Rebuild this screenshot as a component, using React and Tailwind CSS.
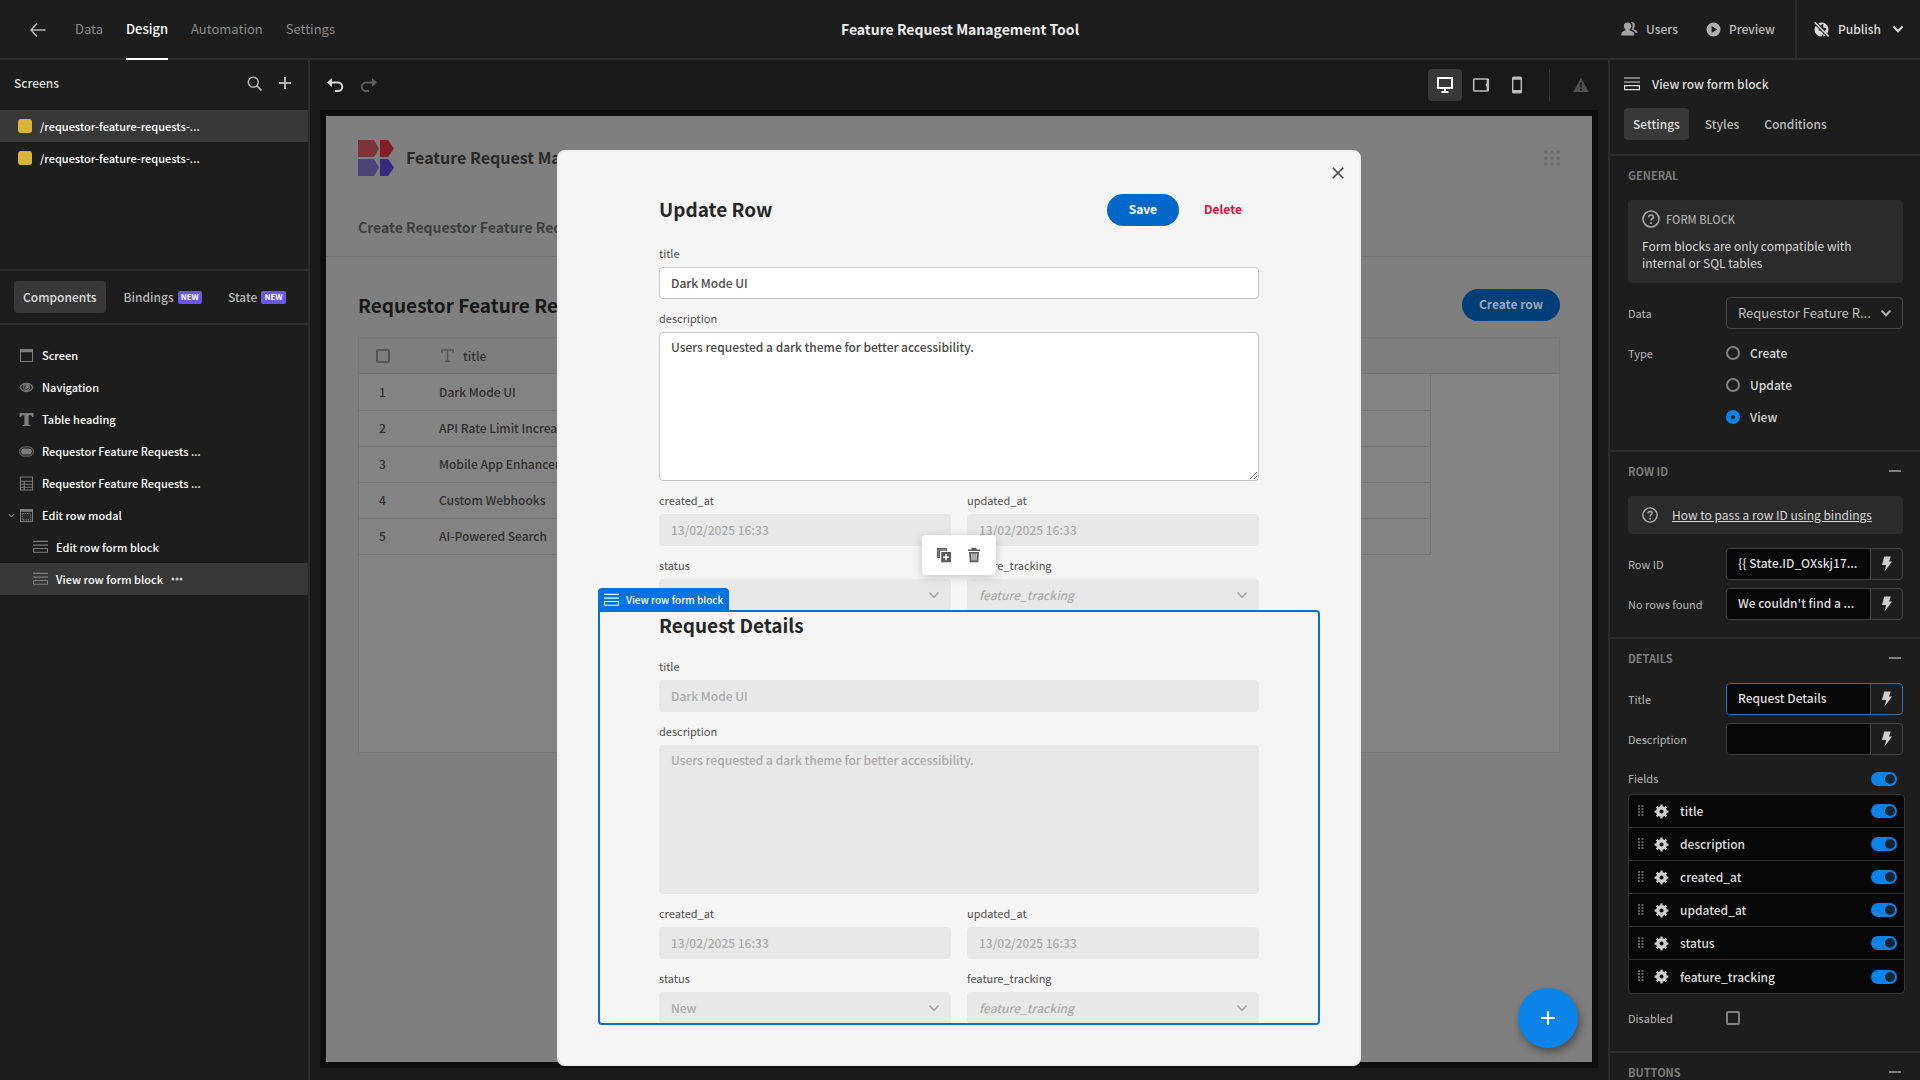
import React, { useId } from "react";

/* ---------- icons ---------- */
const Svg = ({ size = 16, w, h, box = "0 0 16 16", className = "", children }) => (
  <svg width={w || size} height={h || size} viewBox={box} className={"shrink-0 " + className} fill="none" stroke="currentColor" aria-hidden="true">
    {children}
  </svg>
);

const BackIcon = () => (
  <Svg>
    <path d="M15.500 8H1.500M7 1.500L1 8l6 6.500" strokeWidth="1.500" />
  </Svg>
);
const SearchIcon = () => (
  <Svg size={15}>
    <circle cx="6.700" cy="6.700" r="5.300" strokeWidth="1.600" />
    <path d="M10.600 10.600l4.200 4.200" strokeWidth="2" strokeLinecap="round" />
  </Svg>
);
const PlusIcon = ({ size = 14, sw = 2 }) => (
  <Svg size={size} box="0 0 14 14">
    <path d="M7 1v12M1 7h12" strokeWidth={sw} />
  </Svg>
);
const UsersIcon = () => (
  <Svg w={17} h={16} box="0 0 17 16">
    <path stroke="none" fill="currentColor" d="M6.500 1.500c2.300 0 3.700 1.400 3.700 3.500 0 1.400-.6 2.700-1.500 3.500-.3.300-.2.900.2 1.100 2.700.9 4.200 1.800 4.300 3.500V14.500H.3v-1.400c.1-1.700 1.200-2.600 3.900-3.500.4-.2.500-.8.200-1.100-.9-.8-1.500-2.100-1.500-3.500 0-2.100 1.300-3.500 3.600-3.500z" />
    <path stroke="none" fill="currentColor" d="M9.600 1c2.600-.5 4.300.9 4.300 3.200 0 1.200-.4 2.300-1.100 3.100-.3.300-.2.900.2 1.100 2.300.8 3.700 1.700 3.800 3.400h-2.400c-.6-1.500-1.800-2.400-3.900-3.200.8-1 1.200-2.200 1.200-3.500C11.700 3.100 10.900 1.700 9.600 1z" />
  </Svg>
);
const PlayIcon = () => (
  <Svg size={15}>
    <path stroke="none" fill="currentColor" fillRule="evenodd" d="M8 .5a7.500 7.500 0 100 15 7.500 7.500 0 000-15zM6 4.300v7.400L12 8z" />
  </Svg>
);
const GlobeOffIcon = () => (
  <Svg size={17} box="0 0 17 17">
    <path stroke="none" fill="currentColor" d="M5.300 2.300A7 7 0 0112 2.400c2.200 1.200 3.500 3.500 3.500 6.100 0 1.500-.4 2.800-1.200 4L11.500 9.700l1.700-.6-.3-2-2.500-.6-.6-1.900 1.300-1-1.200-.5-2.400 1.500zM2.700 4.700l3 3 .3 1.600 2 .9 1.700 1.500.2 1.800-1.200 2h-1A7 7 0 012.700 4.700z" />
    <path stroke="none" fill="currentColor" d="M10.500 12.500l2 1.900a7 7 0 01-2.400 1z" />
    <path d="M1.700 1.200l14 14.200" strokeWidth="1.500" />
  </Svg>
);
const Chevron = ({ size = 12, sw = 2, className }) => (
  <Svg size={size} box="0 0 12 12" className={className}>
    <path d="M1.500 3.500L6 8.300l4.500-4.800" strokeWidth={sw} />
  </Svg>
);
const UndoIcon = ({ className }) => (
  <Svg w={18} h={16} box="0 0 18 16" className={className}>
    <path d="M4 5.500h8a4 4 0 010 8.500H9" strokeWidth="2" />
    <path d="M6 1L1 5.500 6 10z" fill="currentColor" stroke="none" />
  </Svg>
);
const DesktopIcon = () => (
  <Svg size={18} box="0 0 18 18">
    <rect x="2" y="2" width="14" height="10" strokeWidth="2" />
    <path d="M9 12v4M5.500 16h7" strokeWidth="2" />
  </Svg>
);
const TabletIcon = () => (
  <Svg size={18} box="0 0 18 18">
    <rect x="1.700" y="3" width="14.600" height="12" rx="1" strokeWidth="1.600" />
    <path d="M15.500 3v4.500l-1 1.500 1 1.500V15" strokeWidth="1.800" />
  </Svg>
);
const PhoneIcon = () => (
  <Svg w={12} h={18} box="0 0 12 18">
    <rect x="1.700" y="1.200" width="8.600" height="15.600" rx="1" strokeWidth="1.400" />
    <path d="M1.500 2.500h9M1.500 15.300h9" strokeWidth="2.400" />
  </Svg>
);
const WarnIcon = () => (
  <Svg size={16}>
    <path stroke="none" fill="currentColor" fillRule="evenodd" d="M8 .8L15.800 15H.2L8 .8zM7.200 5.500v5h1.600v-5H7.200zm0 6.200v1.700h1.600v-1.700H7.200z" />
  </Svg>
);
const FormIcon = ({ w = 16 }) => (
  <Svg w={w} h={14} box="0 0 16 14">
    <path d="M0 1h16M0 5h16M.6 8.600h14.800v4H.6z" strokeWidth="1.200" />
  </Svg>
);
const HelpIcon = ({ size = 18 }) => (
  <Svg size={size} box="0 0 18 18">
    <circle cx="9" cy="9" r="8" strokeWidth="1.600" />
    <path d="M6.600 7.200C6.700 5.700 7.600 5 9 5s2.400.8 2.400 2c0 1.700-2.300 1.800-2.300 3.600" strokeWidth="1.600" />
    <path d="M8.100 12.200h1.900V14H8.100z" fill="currentColor" stroke="none" />
  </Svg>
);
const BoltIcon = () => (
  <Svg w={12} h={16} box="0 0 12 16">
    <path stroke="none" fill="currentColor" d="M3.200.5h6.500L8 5.600h3L3.400 15.800 5.200 9H1z" />
  </Svg>
);
const GearIcon = () => (
  <Svg size={15}>
    <circle cx="8" cy="8" r="4" strokeWidth="3.600" />
    <path d="M8 .6v2.600M8 12.800v2.600M.6 8h2.600M12.800 8h2.600M2.800 2.800l1.800 1.800M11.400 11.400l1.800 1.800M2.800 13.200l1.800-1.800M11.400 4.600l1.800-1.800" strokeWidth="2.400" />
  </Svg>
);
const GripIcon = () => (
  <Svg w={7} h={13} box="0 0 7 13">
    {[1, 4, 7, 10].map((y) => (
      <path key={y} d={`M1 ${y}h2M4.500 ${y}h2`} strokeWidth="2" />
    ))}
  </Svg>
);
const ScreenIcon = () => (
  <Svg size={15}>
    <rect x="1.600" y="1.600" width="12.800" height="12.800" strokeWidth="1.100" />
    <path d="M1 3h14" strokeWidth="3" />
  </Svg>
);
const EyeIcon = () => (
  <Svg size={15}>
    <path d="M1.200 8C2.400 5.400 4.900 3.700 8 3.700s5.600 1.700 6.800 4.300c-1.200 2.600-3.700 4.300-6.800 4.300S2.400 10.600 1.200 8z" strokeWidth="1.300" />
    <path stroke="none" fill="currentColor" fillRule="evenodd" d="M8 4.300a3.700 3.700 0 100 7.400 3.700 3.700 0 000-7.400zm0 1.200v2.400h2.400A2.500 2.500 0 118 5.500z" />
    <circle cx="8" cy="8" r="1.600" fill="currentColor" stroke="none" />
  </Svg>
);
const TextIcon = ({ thin }) => (
  <Svg size={15}>
    {thin ? (
      <path d="M2 5V2.200h12V5M8 2.200v12M5.200 14.200h5.600" strokeWidth="1.500" />
    ) : (
      <path stroke="none" fill="currentColor" d="M.5 1h15v4.400H14c-.2-1.500-.9-2-2.200-2h-1.500v9.300c0 .8.500 1.100 1.900 1.100V15H3.800v-1.200c1.400 0 1.900-.3 1.900-1.100V3.400H4.200c-1.300 0-2 .5-2.200 2H.5z" />
    )}
  </Svg>
);
const ButtonIcon = () => (
  <Svg w={15} h={11} box="0 0 16 11">
    <rect x=".6" y=".6" width="14.800" height="9.800" rx="4.900" strokeWidth="1" />
    <rect x="2.200" y="2.200" width="11.600" height="6.600" rx="3.300" fill="currentColor" stroke="none" />
  </Svg>
);
const TableIcon = () => (
  <Svg size={15}>
    <path d="M1.500 1h13v14h-13zM1.500 5.500h13M1.500 8.700h13M1.500 11.900h13M5.600 5.500V15" strokeWidth="1.100" />
  </Svg>
);
const ModalIcon = () => (
  <Svg size={15}>
    <rect x="1.600" y="1.600" width="12.800" height="12.800" strokeWidth="1.100" />
    <path d="M1 2.800h14" strokeWidth="2.600" />
    <rect x="3.500" y="5.800" width="9" height="6.800" fill="currentColor" fillOpacity=".15" strokeWidth="1.200" strokeDasharray="1.500 1" />
  </Svg>
);
const DuplicateIcon = () => (
  <Svg size={16}>
    <path stroke="none" fill="currentColor" d="M1 1h10v3H9.800V2.500H2.500v7.300H4V11H1z" />
    <path stroke="none" fill="currentColor" d="M2.500 2.500h7.300v1.300H4v6H2.500z" />
    <path stroke="none" fill="currentColor" fillRule="evenodd" d="M5.200 5H15v10.200H5.200zM9.300 7v2.400H7v1.500h2.300v2.400h1.500v-2.400h2.300V9.400h-2.300V7z" />
  </Svg>
);
const TrashIcon = () => (
  <Svg size={16}>
    <path stroke="none" fill="currentColor" fillRule="evenodd" d="M5.500.8h5v1.600H14V4H2V2.400h3.500zM3 5h10l-.7 10.200H3.700zM5.300 6.500l.3 7h.9l-.2-7zm2.200 0v7h1v-7zm2.200 0l-.2 7h.9l.3-7z" />
  </Svg>
);
const GridDots = () => (
  <Svg size={16}>
    {[2, 8, 14].map((y) => (
      <path key={y} d={`M.5 ${y}h3M6.500 ${y}h3M12.500 ${y}h3`} strokeWidth="3" />
    ))}
  </Svg>
);
const Logo = () => (
  <Svg size={36} box="0 0 36 36">
    <g stroke="none">
      <path fill="#7d3438" d="M0 0h16l5 8.500-5 8.500H0z" />
      <path fill="#801f26" d="M22 0h8l6 8.500-6 8.500h-8z" />
      <path fill="#4c4379" d="M0 19h16l5 8.500-5 8.500H0z" />
      <path fill="#352a80" d="M22 19h8l6 8.500-6 8.500h-8z" />
    </g>
  </Svg>
);

/* ---------- header ---------- */
const TopTab = ({ active, children }) => (
  <a
    href="#"
    className={
      "flex h-[60px] items-center text-[13px] " +
      (active ? "border-b-2 border-white font-medium text-white" : "pb-0.5 text-[#8a8a8a]")
    }
  >
    {children}
  </a>
);

const Header = () => (
  <header className="grid h-[60px] shrink-0 grid-cols-[1fr_auto_1fr] bg-[#1d1d1d] shadow-[inset_0_-2px_0_#2c2c2c]">
    <nav className="flex items-center gap-[23px] pl-[30px]">
      <button aria-label="Back" className="mr-1.5 text-[#b8b8b8]">
        <BackIcon />
      </button>
      <TopTab>Data</TopTab>
      <TopTab active>Design</TopTab>
      <TopTab>Automation</TopTab>
      <TopTab>Settings</TopTab>
    </nav>
    <h1 className="flex items-center pb-0.5 text-sm font-bold text-[#ececec]">Feature Request Management Tool</h1>
    <div className="flex h-[58px] items-center justify-end text-xs font-medium text-[#bcbcbc]">
      <button className="mr-7 flex items-center gap-2">
        <span className="text-[#a4a4a4]"><UsersIcon /></span>Users
      </button>
      <button className="mr-5 flex items-center gap-2">
        <span className="text-[#b0b0b0]"><PlayIcon /></span>Preview
      </button>
      <button className="flex h-full items-center gap-2 border-l-2 border-[#2c2c2c] pl-4 pr-4 text-[#dcdcdc]">
        <GlobeOffIcon />
        Publish
        <Chevron className="ml-[3px]" />
      </button>
    </div>
  </header>
);

/* ---------- left panel ---------- */
const NewBadge = () => (
  <span className="flex h-[13px] items-center rounded-[2px] bg-[#6a55f0] px-[3px] text-[8px] font-bold leading-none text-white">NEW</span>
);

const treeItems = [
  { label: "Screen", icon: <ScreenIcon /> },
  { label: "Navigation", icon: <EyeIcon /> },
  { label: "Table heading", icon: <TextIcon /> },
  { label: "Requestor Feature Requests ...", icon: <ButtonIcon /> },
  { label: "Requestor Feature Requests ...", icon: <TableIcon /> },
  { label: "Edit row modal", icon: <ModalIcon />, open: true },
  { label: "Edit row form block", icon: <FormIcon w={15} />, nested: true },
  { label: "View row form block", icon: <FormIcon w={15} />, nested: true, selected: true },
];

const LeftPanel = () => (
  <aside className="flex w-[310px] shrink-0 flex-col border-r-2 border-[#2c2c2c] bg-[#1d1d1d]">
    <div className="flex h-[50px] items-center pb-1 pl-3.5 pr-4">
      <h2 className="flex-1 text-xs font-medium text-[#dedede]">Screens</h2>
      <button aria-label="Search" className="mr-4 text-[#b4b4b4]"><SearchIcon /></button>
      <button aria-label="Add screen" className="text-[#b4b4b4]"><PlusIcon /></button>
    </div>
    <ul className="h-[159px] text-[11px] font-medium text-white">
      {[true, false].map((sel, i) => (
        <li key={i} className={"flex h-8 items-center gap-2 pl-[18px] " + (sel ? "bg-[#383838]" : "")}>
          <span className="size-3.5 rounded-[3px] bg-[#d8b43a]" />
          /requestor-feature-requests-...
        </li>
      ))}
    </ul>
    <div className="flex h-[56px] shrink-0 items-center border-y-2 border-[#2c2c2c] pl-3.5 text-xs font-medium text-[#b8b8b8]">
      <button className="h-8 rounded bg-[#383838] px-[9px] text-[#dedede]">Components</button>
      <button className="ml-[18px] flex items-center gap-1">Bindings<NewBadge /></button>
      <button className="ml-[26px] flex items-center gap-1">State<NewBadge /></button>
    </div>
    <ul className="pt-[14px] text-[11px] font-medium text-white">
      {treeItems.map((t, i) => (
        <li
          key={i}
          className={"flex h-8 items-center gap-2 " + (t.nested ? "pl-[33px] " : t.open ? "pl-2 " : "pl-[19px] ") + (t.selected ? "bg-[#383838]" : "")}
        >
          <span className="flex items-center gap-1 text-[#7c7c7c]">
            {t.open && <Chevron size={7} sw={1.8} />}
            {t.icon}
          </span>
          {t.label}
          {t.selected && (
            <button aria-label="More" className="text-[#cccccc]">
              <Svg w={12} h={4} box="0 0 12 4">
                <g fill="currentColor" stroke="none"><circle cx="2" cy="2" r="1.500" /><circle cx="6" cy="2" r="1.500" /><circle cx="10" cy="2" r="1.500" /></g>
              </Svg>
            </button>
          )}
        </li>
      ))}
    </ul>
  </aside>
);

/* ---------- modal forms ---------- */
const Field = ({ label, children }) => {
  const id = useId();
  return (
    <div className="min-w-0">
      <label htmlFor={id} className="flex h-[25px] items-center pb-0.5 text-[11px] text-[#505050]">{label}</label>
      {React.cloneElement(children, { id })}
    </div>
  );
};

const boxTone = (disabled) =>
  disabled ? "resize-none border-[#e8e8e8] bg-[#e8e8e8] text-[#ababab]" : "border-[#c4c4c4] bg-white text-[#484848]";

const TextBox = ({ disabled, ...p }) => (
  <input {...p} disabled={disabled} className={"block h-8 w-full rounded border px-[11px] pb-0.5 text-xs font-medium " + boxTone(disabled)} />
);
const Area = ({ disabled, ...p }) => (
  <textarea {...p} disabled={disabled} className={"block h-[149px] w-full rounded border px-[11px] py-1 text-xs font-medium leading-5 " + boxTone(disabled)} />
);
const Picker = ({ id, value, italic }) => (
  <div className="relative">
    <select id={id} disabled className={"block h-8 w-full appearance-none rounded bg-[#e8e8e8] px-3 text-xs font-medium text-[#ababab] opacity-100 " + (italic ? "italic" : "")}>
      <option>{value}</option>
    </select>
    <Chevron sw={1.6} className="pointer-events-none absolute right-[11px] top-[10px] text-[#a6a6a6]" />
  </div>
);

const RowForm = ({ disabled, status }) => (
  <div className="grid grid-cols-2 gap-x-4 gap-y-2">
    <div className="col-span-2"><Field label="title"><TextBox disabled={disabled} defaultValue="Dark Mode UI" /></Field></div>
    <div className="col-span-2">
      <Field label="description"><Area disabled={disabled} defaultValue="Users requested a dark theme for better accessibility." /></Field>
    </div>
    <Field label="created_at"><TextBox disabled defaultValue="13/02/2025 16:33" /></Field>
    <Field label="updated_at"><TextBox disabled defaultValue="13/02/2025 16:33" /></Field>
    <Field label="status"><Picker value={status} /></Field>
    <Field label="feature_tracking"><Picker value="feature_tracking" italic /></Field>
  </div>
);

const Modal = () => (
  <div role="dialog" aria-label="Edit row modal" className="absolute inset-x-0 top-[34px] mx-auto w-[804px] rounded-lg border-2 border-[#efefef] bg-[#f5f5f5] px-10 pb-10 pt-[42px]">
    <button aria-label="Close" className="absolute right-[14px] top-[14px] text-[#444444]">
      <Svg size={14}><path d="M2 2l12 12M14 2L2 14" strokeWidth="1.900" /></Svg>
    </button>
    <form className="px-[60px]">
      <div className="mb-4 flex h-8 items-center">
        <h2 className="flex-1 pb-0.5 text-[19px] font-bold text-[#262626]">Update Row</h2>
        <button type="button" className="h-8 rounded-full bg-[#0068c8] px-[22px] pb-0.5 text-xs font-bold text-white">Save</button>
        <button type="button" className="ml-2 h-8 rounded-full px-[17px] pb-0.5 text-xs font-bold text-[#d7143a]">Delete</button>
      </div>
      <RowForm status="" />
    </form>
    <form className="relative px-[60px]">
      <h2 className="mb-[15px] flex h-[29px] items-center text-[19px] font-bold text-[#262626]">Request Details</h2>
      <RowForm disabled status="New" />
      <div className="pointer-events-none absolute -inset-px rounded-[4px] rounded-tl-none border-2 border-[#0a6fd0]" />
      <div className="absolute -left-px -top-[23px] flex h-[23px] items-center gap-[7px] rounded-t bg-[#0073e0] px-[6px] text-[10px] font-medium text-white">
        <FormIcon w={15} />
        View row form block
      </div>
      <div className="absolute inset-x-0 -top-[76px] mx-auto flex h-10 w-[74px] items-center justify-center gap-[14px] rounded bg-white text-[#5c5c5c] shadow-[0_2px_10px_rgba(0,0,0,0.2)]">
        <button type="button" aria-label="Duplicate"><DuplicateIcon /></button>
        <button type="button" aria-label="Delete component"><TrashIcon /></button>
      </div>
    </form>
  </div>
);

/* ---------- canvas ---------- */
const rows = ["Dark Mode UI", "API Rate Limit Increase", "Mobile App Enhancements", "Custom Webhooks", "AI-Powered Search"];

const Preview = () => (
  <div className="relative flex min-h-0 flex-1 flex-col border-[6px] border-[#0d0d0d] bg-[#7f7f7f]">
    <div className="flex h-[84px] items-center px-8">
      <Logo />
      <span className="ml-3 flex-1 pb-0.5 text-base font-bold text-[#2a2a2a]">Feature Request Management Tool</span>
      <button aria-label="Apps" className="text-[#686868]"><GridDots /></button>
    </div>
    <div className="flex h-[57px] items-center border-b border-[#727272] px-8 pb-0.5 text-sm font-bold text-[#3e3e3e]">
      <a href="#">Create Requestor Feature Requests</a>
    </div>
    <div className="mt-8 flex h-8 items-center px-8">
      <h2 className="flex-1 text-[19px] font-bold text-[#181818]">Requestor Feature Requests</h2>
      <button className="h-8 rounded-full bg-[#003e78] px-[17px] pb-0.5 text-xs font-bold text-[#9fa8b2]">Create row</button>
    </div>
    <div className="mx-8 mt-4 h-[416px] border border-[#787878] bg-[#838383]">
      <div className="border-b border-[#747474] bg-[#7e7e7e]">
        <div className="flex h-[35px] items-center">
          <div className="flex w-[72px] pl-[17px]">
            <input type="checkbox" aria-label="Select all" className="size-3.5 appearance-none rounded-[2px] border-2 border-[#555555]" />
          </div>
          <div className="flex flex-1 items-center gap-2 pl-[9px] text-xs font-medium text-[#333333]">
            <span className="text-[#555555]"><TextIcon thin /></span>title
          </div>
        </div>
      </div>
      <table className="w-[calc(100%-128px)] border-r border-[#747474] text-xs font-medium text-[#303030]">
        <tbody>
          {rows.map((r, i) => (
            <tr key={r} className="h-9 border-b border-[#747474]">
              <td className="w-[72px] pl-5">{i + 1}</td>
              <td className="pl-2">{r}</td>
            </tr>
          ))}
        </tbody>
      </table>
    </div>
    <button aria-label="Add component" className="absolute bottom-[14px] right-[14px] flex size-[60px] items-center justify-center rounded-full bg-[#0a84e8] text-white shadow-[2px_4px_8px_rgba(0,0,0,0.4)]">
      <PlusIcon size={16} sw={1.9} />
    </button>
    <Modal />
  </div>
);

const Canvas = () => (
  <main className="flex min-w-0 flex-1 flex-col bg-[#191919] px-[10px] pb-3">
    <div className="flex h-[50px] shrink-0 items-center pr-[9px]">
      <button aria-label="Undo" className="ml-1.5 text-[#d8d8d8]"><UndoIcon /></button>
      <button aria-label="Redo" className="ml-4 text-[#5c5c5c]"><UndoIcon className="-scale-x-100" /></button>
      <div className="flex-1" />
      <button aria-label="Desktop" className="flex h-8 w-[34px] items-center justify-center rounded bg-[#383838] text-white"><DesktopIcon /></button>
      <button aria-label="Tablet" className="flex w-[38px] justify-center text-[#bcbcbc]"><TabletIcon /></button>
      <button aria-label="Mobile" className="flex w-[34px] justify-center text-[#bcbcbc]"><PhoneIcon /></button>
      <div className="ml-[15px] h-8 w-px bg-[#303030]" />
      <div className="ml-[23px] text-[#505050]"><WarnIcon /></div>
    </div>
    <Preview />
  </main>
);

/* ---------- right panel ---------- */
const Section = ({ title, collapsible = true, children }) => (
  <section className="border-b-2 border-[#2c2c2c] pb-[17px] pl-[18px] pr-[17px]">
    <h3 className="mb-1.5 flex h-[38px] items-center justify-between pr-[2px] text-[11px] font-bold text-[#7c7c7c]">
      {title}
      {collapsible && <button aria-label={"Collapse " + title} className="flex h-4 w-3 items-center"><span className="h-[2px] w-3 bg-[#808080]" /></button>}
    </h3>
    <div className="flex flex-col gap-2">{children}</div>
  </section>
);

const Row = ({ label, htmlFor, children }) => (
  <div className="flex">
    <label htmlFor={htmlFor} className="flex h-8 w-[98px] shrink-0 items-center text-[11px] text-[#b8b8b8]">{label}</label>
    <div className="min-w-0 flex-1">{children}</div>
  </div>
);

const BindInput = ({ label, value, focused }) => {
  const id = useId();
  const edge = focused ? "border-[#1f77c4]" : "border-[#404040]";
  return (
    <Row label={label} htmlFor={id}>
      <div className={"flex h-8 overflow-hidden rounded border " + edge}>
        <input id={id} defaultValue={value} className="min-w-0 flex-1 bg-[#070707] pb-0.5 pl-[11px] text-xs font-medium text-[#dedede] outline-none" />
        <button aria-label={"Bind " + label} className="flex w-8 items-center justify-center border-l border-[#404040] text-[#cfcfcf]"><BoltIcon /></button>
      </div>
    </Row>
  );
};

const Toggle = ({ label }) => (
  <input
    type="checkbox"
    role="switch"
    aria-label={label}
    defaultChecked
    className="relative h-3.5 w-[26px] shrink-0 appearance-none rounded-full bg-[#0a84e8] before:absolute before:right-[2px] before:top-[2px] before:size-[10px] before:rounded-full before:bg-[#1a2430]"
  />
);

const fields = ["title", "description", "created_at", "updated_at", "status", "feature_tracking"];

const RightPanel = () => (
  <aside className="flex w-[312px] shrink-0 flex-col overflow-hidden border-l-2 border-[#2c2c2c] bg-[#1d1d1d]">
    <div className="border-b-2 border-[#2c2c2c] pb-[14px] pl-[14px]">
      <h2 className="flex h-12 items-center gap-3 text-xs font-medium text-[#dcdcdc]"><FormIcon />View row form block</h2>
      <div className="flex text-xs font-medium text-[#bcbcbc]">
        <button className="h-8 rounded bg-[#383838] px-[9px] text-[#dedede]">Settings</button>
        <button className="h-8 px-4">Styles</button>
        <button className="h-8 px-[9px]">Conditions</button>
      </div>
    </div>

    <Section title="GENERAL" collapsible={false}>
      <div className="mb-1.5 rounded bg-[#2b2b2b] px-3.5 pb-3 pt-[9px]">
        <div className="flex h-5 items-center gap-[6px] text-[11px] font-medium text-[#a8a8a8]"><HelpIcon />FORM BLOCK</div>
        <p className="mt-2 text-xs leading-[17px] text-[#d8d8d8]">Form blocks are only compatible with internal or SQL tables</p>
      </div>
      <Row label="Data" htmlFor="data-source">
        <div className="relative">
          <select id="data-source" className="block h-8 w-full appearance-none rounded border border-[#454545] bg-[#1d1d1d] pl-[11px] pr-6 text-[13px] text-[#c0c0c0]">
            <option>Requestor Feature R...</option>
          </select>
          <Chevron className="pointer-events-none absolute right-[11px] top-[10px] text-[#b0b0b0]" />
        </div>
      </Row>
      <Row label="Type">
        {["Create", "Update", "View"].map((t) => (
          <label key={t} className="flex h-8 items-center gap-[10px] text-xs font-medium text-[#d8d8d8]">
            <input
              type="radio"
              name="form-type"
              defaultChecked={t === "View"}
              className="size-3.5 appearance-none rounded-full border-2 border-[#808080] checked:border-[5px] checked:border-[#0a84e8]"
            />
            {t}
          </label>
        ))}
      </Row>
    </Section>

    <Section title="ROW ID">
      <div className="mb-1.5 flex h-[38px] items-center gap-3.5 rounded bg-[#2b2b2b] pl-3.5 text-xs text-[#d8d8d8]">
        <span className="text-[#b0b0b0]"><HelpIcon size={16} /></span>
        <a href="#" className="underline">How to pass a row ID using bindings</a>
      </div>
      <BindInput label="Row ID" value="{{ State.ID_OXskj17..." />
      <BindInput label="No rows found" value="We couldn't find a ..." />
    </Section>

    <Section title="DETAILS">
      <BindInput label="Title" value="Request Details" focused />
      <BindInput label="Description" value="" />
      <div>
        <div className="flex h-[31px] items-center justify-between pr-1.5 text-[11px] text-[#b8b8b8]">Fields<Toggle label="Fields" /></div>
        <ul className="-mr-0.5 divide-y divide-[#333333] rounded border border-[#383838] bg-[#070707]">
          {fields.map((f) => (
            <li key={f} className="flex h-[33px] items-center pl-2 pr-[7px] text-xs font-medium text-[#dedede]">
              <span className="text-[#606060]"><GripIcon /></span>
              <button aria-label={"Configure " + f} className="ml-[10px] mr-[11px] text-[#cfcfcf]"><GearIcon /></button>
              <span className="flex-1">{f}</span>
              <Toggle label={f} />
            </li>
          ))}
        </ul>
      </div>
      <Row label="Disabled" htmlFor="disabled">
        <div className="flex h-8 items-center">
          <input id="disabled" type="checkbox" className="size-3.5 appearance-none rounded-[2px] border-2 border-[#808080]" />
        </div>
      </Row>
    </Section>

    <Section title="BUTTONS" />
  </aside>
);

export default function App() {
  return (
    <div className="flex h-screen flex-col overflow-hidden bg-[#1d1d1d] font-['Noto_Sans_CJK_SC','Noto_Sans',sans-serif]">
      <Header />
      <div className="flex min-h-0 flex-1">
        <LeftPanel />
        <Canvas />
        <RightPanel />
      </div>
    </div>
  );
}
